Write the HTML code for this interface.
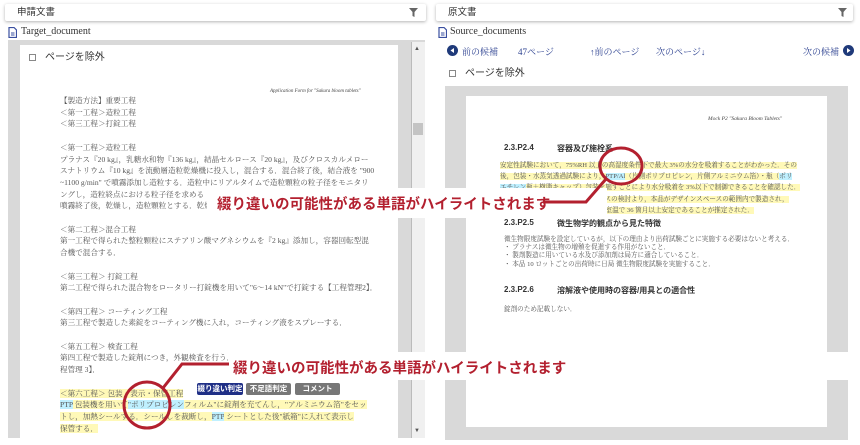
<!DOCTYPE html>
<html><head><meta charset="utf-8">
<style>
*{margin:0;padding:0;box-sizing:border-box}
body{width:860px;height:445px;background:#fff;position:relative;overflow:hidden;font-family:"Liberation Sans","Noto Sans CJK JP",sans-serif;color:#333}
.a{position:absolute;white-space:nowrap}
.hdr{position:absolute;height:17px;background:#fff;box-shadow:0 1px 3px rgba(0,0,0,.3);border-radius:2px;font-size:9.5px;line-height:17px;padding-left:12px;font-family:"Liberation Sans","Noto Sans CJK JP",sans-serif}
.doc{font-family:"Liberation Serif","Noto Serif CJK JP",serif;font-size:7.6px;color:#555;line-height:11.7px}
.y{background:#fff9b8}.c{background:#bff0ff}
.cb{position:absolute;width:7px;height:7px;border:1px solid #888;background:#fff}
.btn{position:absolute;top:383px;height:12px;font-size:7.5px;line-height:12px;color:#fff;text-align:center;border-radius:2px;font-weight:bold}
.nav{font-size:9px;color:#2a3f8f;font-family:"Liberation Serif","Noto Serif CJK JP",serif}
.red{color:#b3202f;font-weight:bold;font-size:14.5px;font-family:"Liberation Sans","Noto Sans CJK JP",sans-serif}
.rd{font-family:"Liberation Serif","Noto Serif CJK JP",serif;font-size:6.6px;color:#555}
.h{font-size:8px;font-weight:bold;color:#333}
</style></head><body>
<div class="hdr" style="left:5px;top:4px;width:421px">申請文書</div>
<svg class="a" style="left:409px;top:8px" width="10" height="9"><path d="M0 0H9L5.5 4V9L3.5 8V4Z" fill="#666"/></svg>
<svg class="a" style="left:8px;top:27px" width="9" height="11"><path d="M1 .5H6L8.5 3V10.5H1Z" fill="none" stroke="#3a4fa0" stroke-width="1.2"/><path d="M3 6H6.5M3 8H6.5" stroke="#3a4fa0"/></svg>
<div class="a" style="left:21px;top:25px;font-size:10px;font-family:'Liberation Serif',serif;line-height:14px">Target_document</div>
<div class="a" style="left:8px;top:40px;width:417px;height:398px;background:#d9d9d9"></div>
<div class="a" style="left:20px;top:45px;width:378px;height:393px;background:#fff"></div>
<div class="a" style="left:411px;top:42px;width:14px;height:396px;background:#f0f0f0;border-left:1px solid #bbb"></div>
<div class="a" style="left:413px;top:123px;width:10px;height:12px;background:#c4c4c4"></div>
<div class="a" style="left:414px;top:46px;font-size:6px;color:#555">▲</div>
<div class="a" style="left:414px;top:428px;font-size:6px;color:#555">▼</div>
<div class="cb" style="left:29px;top:54px"></div>
<div class="a" style="left:45px;top:51px;font-size:10px;line-height:13px">ページを除外</div>
<div class="a" style="left:270px;top:89px;font-size:5px;font-style:italic;font-family:'Liberation Serif',serif;color:#444">Application Form for "Sakura bloom tablets"</div>
<div class="a doc" style="left:60px;top:95px">
【製造方法】重要工程<br>＜第一工程＞造粒工程<br>＜第三工程＞打錠工程<br><br>
＜第一工程＞造粒工程<br>
プラナス『20 kg』，乳糖水和物『136 kg』，結晶セルロース『20 kg』，及びクロスカルメロー<br>
スナトリウム『10 kg』を流動層造粒乾燥機に投入し，混合する．混合終了後，結合液を "900<br>
~1100 g/min" で噴霧添加し造粒する．造粒中にリアルタイムで造粒顆粒の粒子径をモニタリ<br>
ングし，造粒終点における粒子径を求める【<br>
噴霧終了後，乾燥し，造粒顆粒とする．乾燥<br><br>
＜第二工程＞混合工程<br>
第一工程で得られた整粒顆粒にステアリン酸マグネシウムを『2 kg』添加し，容器回転型混<br>
合機で混合する．<br><br>
＜第三工程＞ 打錠工程<br>
第二工程で得られた混合物をロータリー打錠機を用いて"6～14 kN"で打錠する【工程管理2】．<br><br>
＜第四工程＞ コーティング工程<br>
第三工程で製造した素錠をコーティング機に入れ，コーティング液をスプレーする．<br><br>
＜第五工程＞ 検査工程<br>
第四工程で製造した錠剤につき，外観検査を行う．<br>
程管理 3】．<br><br>
<span class="y">＜第六工程＞ 包装・表示・保管工程</span><br>
<span class="c">PTP</span><span class="y"> 包装機を用いて</span><span class="c">"ポリプロピレン</span><span class="y">フィルム"に錠剤を充てんし，"アルミニウム箔"をセッ</span><br>
<span class="y">トし，加熱シールする．シールしを裁断し，</span><span class="c">PTP</span><span class="y"> シートとした後"紙箱"に入れて表示し</span><br>
<span class="y">保管する．</span>
</div>
<div class="btn" style="left:197px;width:46px;background:#1f2f86">綴り違い判定</div>
<div class="btn" style="left:246px;width:45px;background:#777">不足語判定</div>
<div class="btn" style="left:295px;width:45px;background:#777">コメント</div>

<div class="hdr" style="left:436px;top:4px;width:417px">原文書</div>
<svg class="a" style="left:838px;top:8px" width="10" height="9"><path d="M0 0H9L5.5 4V9L3.5 8V4Z" fill="#666"/></svg>
<svg class="a" style="left:438px;top:27px" width="9" height="11"><path d="M1 .5H6L8.5 3V10.5H1Z" fill="none" stroke="#3a4fa0" stroke-width="1.2"/><path d="M3 6H6.5M3 8H6.5" stroke="#3a4fa0"/></svg>
<div class="a" style="left:450px;top:25px;font-size:10px;font-family:'Liberation Serif',serif;line-height:14px">Source_documents</div>
<svg class="a" style="left:447px;top:45px" width="11" height="11"><circle cx="5.5" cy="5.5" r="5.5" fill="#1f3a7a"/><path d="M7 3V8L3.5 5.5Z" fill="#fff"/></svg>
<div class="a nav" style="left:462px;top:45px">前の候補</div>
<div class="a nav" style="left:518px;top:45px">47ページ</div>
<div class="a nav" style="left:590px;top:45px">↑前のページ</div>
<div class="a nav" style="left:656px;top:45px">次のページ↓</div>
<div class="a nav" style="left:803px;top:45px">次の候補</div>
<svg class="a" style="left:843px;top:45px" width="11" height="11"><circle cx="5.5" cy="5.5" r="5.5" fill="#1f3a7a"/><path d="M4 3V8L7.5 5.5Z" fill="#fff"/></svg>
<div class="cb" style="left:449px;top:70px"></div>
<div class="a" style="left:465px;top:67px;font-size:10px;line-height:13px">ページを除外</div>
<div class="a" style="left:445px;top:86px;width:403px;height:354px;background:#d9d9d9"></div>
<div class="a" style="left:466px;top:96px;width:361px;height:331px;background:#fff"></div>
<div class="a" style="left:708px;top:116px;font-size:5.5px;font-style:italic;font-family:'Liberation Serif',serif;color:#444">Mock P2 "Sakura Bloom Tablets"</div>
<div class="a h" style="left:504px;top:143px">2.3.P2.4</div>
<div class="a h" style="left:557px;top:143px">容器及び施栓系</div>
<div class="a rd" style="left:500px;top:160px;line-height:11.2px">
<span class="y">安定性試験において，75%RH 以上の高湿度条件下で最大 3%の水分を吸着することがわかった．その</span><br>
<span class="y">後，包装・水蒸気透過試験により，</span><span class="c">PTP/Al</span><span class="y">（片側ポリプロピレン，片側アルミニウム箔）・瓶（</span><span class="c">ポリ</span><br>
<span class="c">エチレン</span><span class="y">瓶＋樹脂キャップ）包装を施すことにより水分吸着を 3%以下で制御できることを確認した．</span><br>
<span class="y">　　　　　　　及びデザインスペースの検討より，本品がデザインスペースの範囲内で製造され，</span><br>
<span class="y">　　　　　　　包装を施した場合，室温で 36 箇月以上安定であることが推定された．</span>
</div>
<div class="a h" style="left:504px;top:218px">2.3.P2.5</div>
<div class="a h" style="left:557px;top:218px">微生物学的観点から見た特徴</div>
<div class="a rd" style="left:504px;top:236px;line-height:8.2px">微生物限度試験を設定しているが，以下の理由より出荷試験ごとに実施する必要はないと考える．<br>・ プラナスは微生物の増殖を促進する作用がないこと．<br>・ 製剤製造に用いている水及び添加剤は局方に適合していること．<br>・ 本品 10 ロットごとの出荷時に日局 微生物限度試験を実施すること．</div>
<div class="a h" style="left:504px;top:285px">2.3.P2.6</div>
<div class="a h" style="left:557px;top:285px">溶解液や使用時の容器/用具との適合性</div>
<div class="a rd" style="left:504px;top:303px">錠剤のため記載しない．</div>

<div class="a" style="left:207px;top:188px;width:400px;height:30px;background:#fff"></div>
<div class="a red" style="left:217px;top:193px">綴り違いの可能性がある単語がハイライトされます</div>
<div class="a" style="left:228px;top:352px;width:632px;height:28px;background:#fff"></div>
<div class="a red" style="left:233px;top:357px">綴り違いの可能性がある単語がハイライトされます</div>
<svg class="a" style="left:0;top:0" width="860" height="445">
<g fill="none" stroke="#b3202f" stroke-width="3">
<ellipse cx="621" cy="166" rx="21" ry="18"/>
<path d="M606 179L586 202H543"/>
<circle cx="147" cy="405" r="23"/>
<path d="M163 388L182 364H229"/>
</g></svg>
</body></html>
